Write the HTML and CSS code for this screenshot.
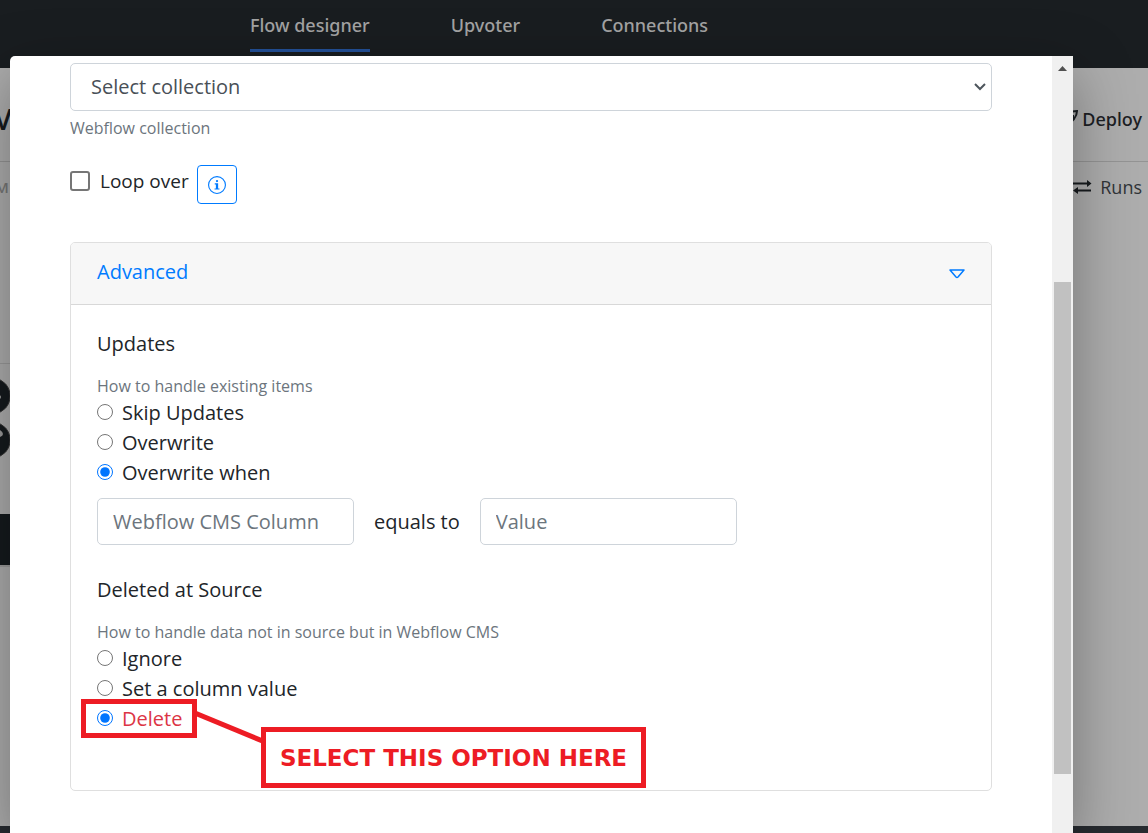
FILE: index.html
```html
<!DOCTYPE html>
<html lang="en">
<head>
<meta charset="utf-8">
<meta name="viewport" content="width=device-width, initial-scale=1">
<title>Flow designer</title>
<link rel="stylesheet" href="styles.css">
</head>
<body>
<div class="page">
  <header class="topbar">
    <nav class="nav">
      <a class="nav-link active" href="#">Flow designer</a>
      <a class="nav-link" href="#">Upvoter</a>
      <a class="nav-link" href="#">Connections</a>
    </nav>
  </header>
  <div class="toolbar">
    <span class="flow-name">V</span>
    <button class="deploy" type="button">
      <svg width="18" height="18" viewBox="0 0 18 18" fill="none" stroke="currentColor" stroke-width="2"><path d="M5 7L9 3Q12 1 17 1Q17 5 14 9L11 12V18M9 6H13V10"/></svg>
      Deploy
    </button>
  </div>
  <div class="subbar">
    <span class="mode">M</span>
    <a class="runs" href="#">
      <svg width="20" height="14" viewBox="0 0 20 14"><path d="M1 2.500h14V0l4.500 3.500L15 7V4.500H1zM19 9.500H6V7L1 10.500 6 14v-2.500h13z" fill="#171b1e"/></svg>
      Runs
    </a>
  </div>
  <main class="canvas">
    <div class="rail">
      <svg class="knobs" width="10" height="84" viewBox="0 0 10 84"><g fill="#151a1d" stroke="#333" stroke-width="1"><ellipse cx="-5" cy="19" rx="15" ry="17"/><ellipse cx="-5" cy="63" rx="15" ry="17"/></g><circle cx="-1" cy="20" r="2" fill="#999"/><path d="M0 53q3 2 3 4t-3 3z" fill="#999"/></svg>
      <div class="block"></div>
    </div>
  </main>
  <footer class="footer"></footer>
</div>

<div class="modal" role="dialog" aria-label="Collection settings">
  <form class="modal-content">
    <div class="select-wrap">
      <select class="select" id="collection"><option>Select collection</option></select>
      <svg class="chevron" width="12" height="8" viewBox="0 0 12 8" fill="none" stroke="#4d555c" stroke-width="2"><path d="M1 1l5 5 5-5"/></svg>
    </div>
    <label class="help" for="collection">Webflow collection</label>
    <div class="loop">
      <label class="loop-label"><input class="check" type="checkbox">Loop over</label>
      <button class="info" type="button" aria-label="Information">
        <svg width="18" height="18" viewBox="0 0 16 16" fill="#007bff"><path d="M8 15A7 7 0 1 1 8 1a7 7 0 0 1 0 14zm0 1A8 8 0 1 0 8 0a8 8 0 0 0 0 16z"/><circle cx="8" cy="4.500" r="1"/><path d="M6 6.500h3V11h1.200v1H5.800v-1H7V7.500H6z"/></svg>
      </button>
    </div>
    <section class="card">
      <button class="card-head" type="button">
        Advanced
        <svg class="caret" width="16" height="10" viewBox="0 0 16 10" fill="none" stroke="#007bff" stroke-width="1.500" stroke-linejoin="round"><path d="M1 1h14L9 8q-1 1-2 0z"/></svg>
      </button>
      <div class="card-body">
        <h2 class="title">Updates</h2>
        <p class="hint">How to handle existing items</p>
        <div class="options">
          <label class="option"><input class="radio" type="radio" name="updates">Skip Updates</label>
          <label class="option"><input class="radio" type="radio" name="updates">Overwrite</label>
          <label class="option"><input class="radio" type="radio" name="updates" checked>Overwrite when</label>
        </div>
        <div class="condition">
          <input class="field" type="text" placeholder="Webflow CMS Column" aria-label="Webflow CMS Column">
          <span>equals to</span>
          <input class="field" type="text" placeholder="Value" aria-label="Value">
        </div>
        <h2 class="title">Deleted at Source</h2>
        <p class="hint">How to handle data not in source but in Webflow CMS</p>
        <div class="options">
          <label class="option"><input class="radio" type="radio" name="deleted">Ignore</label>
          <label class="option"><input class="radio" type="radio" name="deleted">Set a column value</label>
          <div class="marked">
            <label class="option danger"><input class="radio" type="radio" name="deleted" checked>Delete</label>
            <div class="mark"></div>
            <svg class="leader" width="70" height="34" viewBox="0 0 70 34"><path d="M0 3L70 32" stroke="#ed1c24" stroke-width="5"/></svg>
            <strong class="callout">SELECT THIS OPTION HERE</strong>
          </div>
        </div>
      </div>
    </section>
  </form>
  <div class="scrollbar">
    <svg class="arrow" width="9" height="5" viewBox="0 0 9 5"><path d="M0 5L4.500 0 9 5z" fill="#505050"/></svg>
    <div class="thumb"></div>
  </div>
</div>
</body>
</html>
```
FILE: styles.css
```css
* { box-sizing: border-box; }
html, body { height: 100%; }
body { margin: 0; overflow: hidden; font-family: "Open Sans", "Noto Sans", sans-serif; font-size: 20px; color: #212529; }
button, input, select { font: inherit; }

.page { height: 100%; display: flex; flex-direction: column; background: #adadad; }
.topbar { height: 68px; flex: none; background: #191d20; padding-left: 250px; }
.nav { display: flex; gap: 81px; }
.nav-link { font-family: "Noto Sans", sans-serif; font-size: 18px; font-weight: 500; line-height: 25px; padding: 13px 0 10px; color: #a3a3a3; text-decoration: none; }
.nav-link.active { padding-bottom: 11px; border-bottom: 3px solid #235199; }
.toolbar, .subbar { display: flex; align-items: center; justify-content: space-between; padding-right: 6px; flex: none; }
.toolbar { height: 94px; border-bottom: 1px solid #949494; padding-top: 8px; }
.flow-name { font-size: 29px; font-weight: 600; line-height: 40px; margin-left: -6px; color: #171b1e; }
.deploy { display: flex; align-items: center; gap: 4px; border: 0; padding: 0; background: none; color: #1c2024; font-family: "Noto Sans", sans-serif; font-size: 18px; font-weight: 500; }
.subbar { height: 50px; }
.mode { font-size: 15px; font-weight: 600; color: #777; margin-left: -5px; }
.runs { display: flex; align-items: center; gap: 8px; color: #303438; text-decoration: none; font-size: 18px; }
.canvas { flex: 1; padding-top: 151px; }
.rail { width: 10px; border-top: 1px solid #999; border-bottom: 2px solid #999; padding-top: 13px; display: flex; flex-direction: column; gap: 53px; }
.block { height: 51px; background: #151a1d; }
.footer { height: 7px; flex: none; background: #272b30; }

.modal { position: absolute; top: 56px; left: 10px; right: 75px; bottom: 0; display: flex; background: #fff; border-radius: 5px 0 0 0; box-shadow: 0 18px 60px rgba(0, 0, 0, .35); }
.modal-content { flex: 1; padding: 7px 60px 0; overflow: hidden; }
.scrollbar { width: 21px; background: #f0f0f0; padding: 10px 2px 0; display: flex; flex-direction: column; align-items: center; }
.arrow { flex: none; }
.thumb { width: 17px; height: 492px; margin-top: 211px; background: #c1c1c1; }

.select-wrap { display: grid; align-items: center; }
.select { grid-area: 1 / 1; width: 100%; height: 48px; padding: 0 20px 2px; border: 1px solid #ced4da; border-radius: 5px; background: #fff; color: #495057; appearance: none; }
.chevron { grid-area: 1 / 1; justify-self: end; margin-right: 6px; pointer-events: none; }
.help { display: block; margin-top: 6px; font-size: 16px; line-height: 23px; color: #6c757d; }
.loop { display: flex; gap: 8px; margin-top: 25px; }
.loop-label { display: flex; align-items: center; gap: 10px; height: 32px; font-size: 19px; }
.check { width: 20px; height: 20px; margin: 0; appearance: none; border: 2px solid #767676; border-radius: 3px; background: #fff; }
.check:checked { background: #0075ff; border-color: #0075ff; }
.info { width: 40px; height: 39px; padding: 0; display: grid; place-items: center; border: 1px solid #007bff; border-radius: 4px; background: #fff; }

.card { margin-top: 38px; border: 1px solid #dfdfdf; border-radius: 5px; }
.card-head { width: 100%; height: 62px; display: flex; align-items: center; justify-content: space-between; padding: 0 26px 4px; border: 0; border-bottom: 1px solid #d8d8d8; border-radius: 4px 4px 0 0; background: #f7f7f7; color: #007bff; }
.caret { margin-top: 5px; }
.card-body { padding: 24px 26px 57px; }
.title { margin: 0 0 16px; font-size: 20px; font-weight: 400; line-height: 30px; }
.hint { margin: 0; font-size: 16px; line-height: 22px; color: #6c757d; }
.option { display: flex; align-items: center; gap: 9px; height: 30px; width: fit-content; }
.radio { width: 16px; height: 16px; margin: 0; }
.danger { color: #dc3545; }
.condition { display: flex; align-items: center; gap: 20px; margin: 11px 0 30px; }
.field { width: 257px; height: 47px; padding: 0 15px; border: 1px solid #ced4da; border-radius: 5px; background: #fff; }
.field::placeholder { color: #6c757d; }

.marked { position: relative; }
.mark { position: absolute; left: -16px; top: -4px; width: 116px; height: 39px; border: 5px solid #ed1c24; pointer-events: none; }
.leader { position: absolute; left: 98px; top: 7px; }
.callout { position: absolute; left: 164px; top: 24px; width: 385px; height: 61px; display: grid; place-items: center; border: 5px solid #ed1c24; background: #fff; color: #ed1c24; font-family: "DejaVu Sans", sans-serif; font-size: 23px; font-weight: 700; white-space: nowrap; }
```
